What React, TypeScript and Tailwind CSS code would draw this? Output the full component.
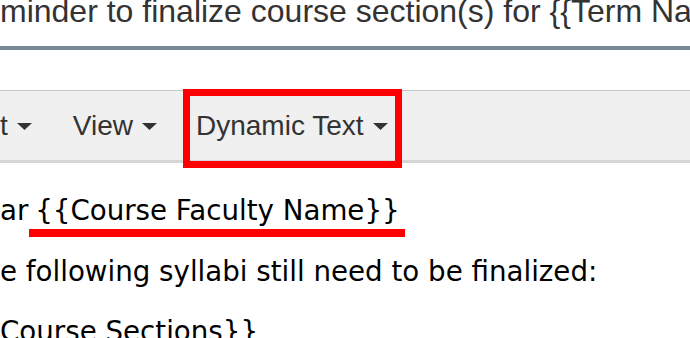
import { ReactNode } from "react";

const Caret = (): JSX.Element => {
  return (
    <svg width="15" height="7" viewBox="0 0 15 7" className="ml-[9px] mt-[2px] shrink-0">
      <path d="M0 0h15L7.5 7z" fill="#333333" />
    </svg>
  );
};

type MenuItemProps = {
  label: string;
  className?: string;
};

const MenuItem = ({ label, className }: MenuItemProps): JSX.Element => {
  return (
    <div className={`flex items-center whitespace-nowrap ${className ?? ""}`}>
      <span>{label}</span>
      <Caret />
    </div>
  );
};

const Line = ({ children }: { children: ReactNode }): JSX.Element => {
  return <p className="h-[60.5px] leading-[60.5px] whitespace-nowrap">{children}</p>;
};

export default function App() {
  return (
    <div className="w-[690px] h-[338px] overflow-hidden bg-white">
      {/* subject */}
      <div className="h-[46px] overflow-hidden">
        <div className="-mt-[4px] whitespace-nowrap font-['Liberation_Sans',Arial,sans-serif] text-[32px] leading-[31px] text-[#333333]">
          minder to finalize course section(s) for {"{{"}Term Name{"}}"}
        </div>
      </div>
      <div className="h-[4px] bg-[#778899]" />

      {/* editor menubar */}
      <div className="mt-[40px] flex h-[73px] items-center border-t border-b-[3px] border-t-[#c6c6c6] border-b-[#d6d6d6] bg-[#f0f0f0] font-['Liberation_Sans',Arial,sans-serif] text-[28px] leading-[28px] text-[#333333]">
        <MenuItem label="t" />
        <MenuItem label="View" className="ml-[41px]" />
        <div className="relative ml-[39px]">
          <MenuItem label="Dynamic Text" />
          {/* annotation box */}
          <div className="absolute -left-[13px] -right-[14px] -top-[23px] -bottom-[28px] border-[7px] border-[#ff0000]" />
        </div>
      </div>

      {/* body */}
      <div className="mt-[18px] font-['DejaVu_Sans',Verdana,sans-serif] text-[27.7px] text-black">
        <Line>
          ar{" "}
          <span className="relative -ml-[2px]">
            {"{{"}Course Faculty Name{"}}"}
            <span className="absolute -left-[6px] -right-[5px] top-[35px] h-[8px] bg-[#ff0000]" />
          </span>
        </Line>
        <Line>e following syllabi still need to be finalized:</Line>
        <Line>Course Sections{"}}"}</Line>
      </div>
    </div>
  );
}
